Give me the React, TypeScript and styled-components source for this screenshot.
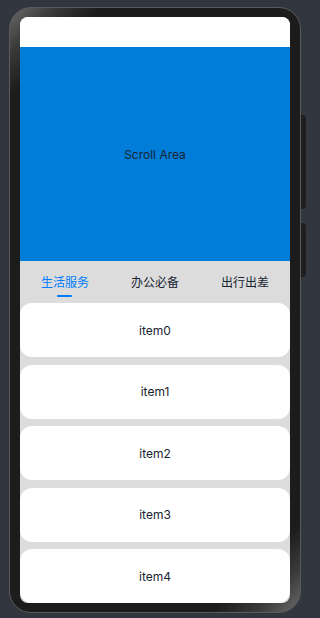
import React, { useState } from "react";
import styled, { createGlobalStyle } from "styled-components";

const GlobalStyle = createGlobalStyle`
  html, body {
    margin: 0;
    padding: 0;
    background-color: #32363f;
    font-family: Inter, "Noto Sans", "Noto Sans CJK SC", sans-serif;
  }
`;

const tabs = ["生活服务", "办公必备", "出行出差"];
const items = ["item0", "item1", "item2", "item3", "item4"];

function App() {
  const [current, setCurrent] = useState(0);

  return (
    <>
      <GlobalStyle />
      <Page>
        <Phone>
          <SideButton $top={107} $height={94} />
          <SideButton $top={215} $height={54} />
          <Screen>
            <Header />
            <ScrollArea>Scroll Area</ScrollArea>
            <TabBar>
              {tabs.map((tab, i) => (
                <Tab key={tab} $active={i === current} onClick={() => setCurrent(i)}>
                  {tab}
                  <Indicator $active={i === current} />
                </Tab>
              ))}
            </TabBar>
            <List>
              {items.map((item) => (
                <Card key={item}>{item}</Card>
              ))}
            </List>
          </Screen>
        </Phone>
      </Page>
    </>
  );
}

const Page = styled.div`
  width: 314px;
  height: 618px;
  padding: 7px 0 0 9px;
  box-sizing: border-box;
  overflow: hidden;
`;

const Phone = styled.div`
  position: relative;
  width: 292px;
  height: 606px;
  box-sizing: border-box;
  padding: 9px 10px;
  border-radius: 22px;
  border: 1px solid #5a5a5a;
  background: linear-gradient(
    135deg,
    #6a6a6a 0%,
    #3a3a3a 5%,
    #1c1c1c 10%,
    #1c1c1c 90%,
    #3a3a3a 95%,
    #6a6a6a 100%
  );
`;

const SideButton = styled.div<{ $top: number; $height: number }>`
  position: absolute;
  right: -6px;
  top: ${({ $top }) => $top}px;
  width: 5px;
  height: ${({ $height }) => $height}px;
  border-radius: 0 4px 4px 0;
  background-color: #1e1e1e;
`;

const Screen = styled.div`
  width: 100%;
  height: 100%;
  border-radius: 8px;
  overflow: hidden;
  background-color: #dcdcdc;
  display: flex;
  flex-direction: column;
`;

const Header = styled.div`
  height: 30px;
  flex-shrink: 0;
  background-color: #ffffff;
`;

const ScrollArea = styled.div`
  height: 214px;
  flex-shrink: 0;
  display: flex;
  align-items: center;
  justify-content: center;
  background-color: #007dd9;
  color: #182431;
  font-size: 12px;
`;

const TabBar = styled.div`
  height: 42px;
  flex-shrink: 0;
  display: grid;
  grid-template-columns: repeat(3, 1fr);
`;

const Tab = styled.div<{ $active: boolean }>`
  position: relative;
  display: flex;
  align-items: center;
  justify-content: center;
  padding-bottom: 2px;
  font-family: "Noto Sans CJK SC", sans-serif;
  font-size: 12px;
  color: ${({ $active }) => ($active ? "#007dff" : "#182431")};
  cursor: pointer;
`;

const Indicator = styled.span<{ $active: boolean }>`
  display: ${({ $active }) => ($active ? "block" : "none")};
  position: absolute;
  left: 50%;
  bottom: 6px;
  width: 15px;
  height: 2px;
  margin-left: -8px;
  border-radius: 1px;
  background-color: #007dff;
`;

const List = styled.div`
  display: flex;
  flex-direction: column;
  gap: 7.5px;
`;

const Card = styled.div`
  height: 54px;
  flex-shrink: 0;
  display: flex;
  align-items: center;
  justify-content: center;
  border-radius: 12px;
  background-color: #ffffff;
  color: #182431;
  font-size: 12px;
`;

export default App;
